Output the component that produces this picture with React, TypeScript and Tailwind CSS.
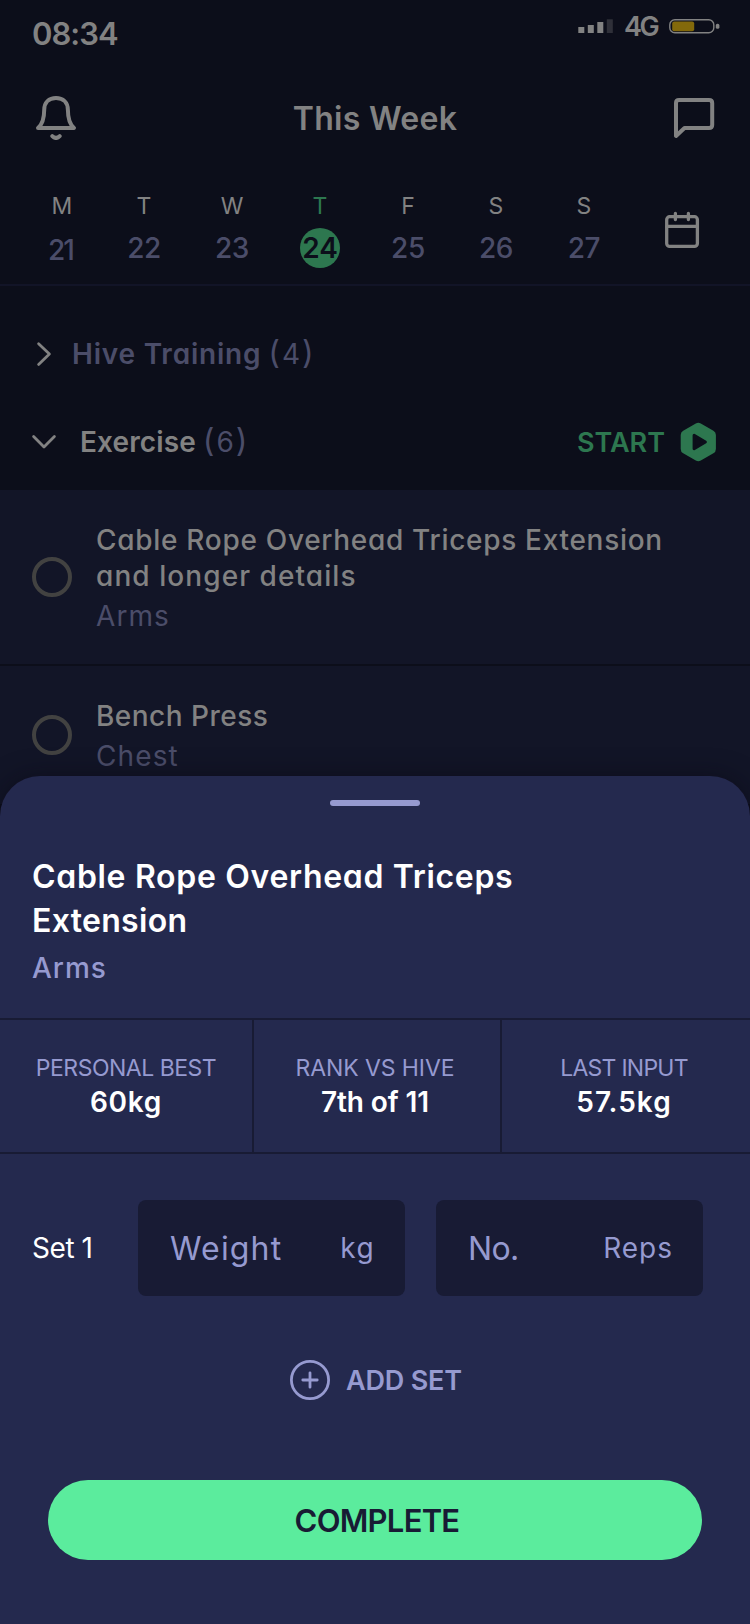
import type { ReactNode } from "react";

type Day = { letter: string; date: string; active?: boolean };

const days: Day[] = [
  { letter: "M", date: "21" },
  { letter: "T", date: "22" },
  { letter: "W", date: "23" },
  { letter: "T", date: "24", active: true },
  { letter: "F", date: "25" },
  { letter: "S", date: "26" },
  { letter: "S", date: "27" },
];

function StatusBar() {
  return (
    <div className="flex h-[72px] items-start justify-between pl-8 pr-[29px]">
      <span className="mt-[13px] text-[31px] font-semibold leading-[42px] tracking-[-0.98px]">08:34</span>
      <div className="mt-[6px] flex h-10 items-center">
        <svg width="36" height="14" viewBox="0 0 36 14" fill="currentColor" className="mr-[10px]">
          <rect x="0.3" y="8" width="6" height="6" />
          <rect x="9.8" y="6" width="6" height="8" />
          <rect x="19.3" y="3" width="6" height="11" />
          <rect x="28.8" y="0.3" width="6" height="13.7" opacity="0.3" />
        </svg>
        <span className="w-[45px] pt-px text-[27px] font-semibold leading-10 tracking-[-2.4px]">4G</span>
        <svg width="52" height="15" viewBox="0 0 52 15">
          <rect x="0.8" y="0.8" width="44" height="13" rx="5" fill="none" stroke="currentColor" strokeWidth="1.4" />
          <rect x="3.2" y="2.4" width="22" height="9.8" rx="2" fill="#83690b" />
          <rect x="46.8" y="4.8" width="3.6" height="5" rx="1.6" fill="currentColor" />
        </svg>
      </div>
    </div>
  );
}

function Header() {
  return (
    <div className="flex h-[92px] items-center justify-between px-[35px]">
      <svg width="42" height="44" viewBox="35 96 42 44" fill="none" stroke="currentColor" strokeWidth="4" strokeLinecap="round" strokeLinejoin="round">
        <path d="M38 128C42.2 124.4 44.2 117 44.2 110C44.2 102.4 49 98 56 98C63 98 67.9 102.4 67.9 110C67.9 117 69.9 124.4 74 128Z" />
        <path d="M52.3 136.1Q56 139.8 59.7 136.1" />
      </svg>
      <h1 className="text-[32px] font-semibold leading-[41px] tracking-[0.27px]">This Week</h1>
      <svg width="42" height="42" viewBox="673 97 42 42" fill="none" stroke="currentColor" strokeWidth="4" strokeLinecap="round" strokeLinejoin="round">
        <path d="M676 136V103Q676 100 679 100H709Q712.2 100 712.2 103V125Q712.2 128 709 128H684.5Z" />
      </svg>
    </div>
  );
}

function DayCell({ day, first }: { day: Day; first: boolean }) {
  return (
    <div className={first ? "flex w-[76px] flex-col items-center" : "flex w-[88px] flex-col items-center"}>
      <span className={day.active ? "text-[23px] leading-7 text-[#2d774f]" : "text-[23px] leading-7"}>{day.letter}</span>
      {day.active ? (
        <span className="mt-2 h-10 w-10 rounded-full bg-[#2d774f] text-center text-[28px] font-semibold leading-10 text-[#0c0e1a]">
          {day.date}
        </span>
      ) : first ? (
        <span className="mt-2 h-10 pr-[3px] pt-1 text-[28px] font-medium leading-9 tracking-[-2px] text-[#4b4d69]">{day.date}</span>
      ) : (
        <span className="mt-2 h-10 text-[28px] font-medium leading-10 tracking-[-0.4px] text-[#4b4d69]">{day.date}</span>
      )}
    </div>
  );
}

function WeekStrip() {
  return (
    <div className="flex h-[122px] items-start justify-between border-b-2 border-[#121427] pl-6 pr-[50px] pt-7">
      <div className="flex">
        {days.map((d, i) => (
          <DayCell key={d.date} day={d} first={i === 0} />
        ))}
      </div>
      <svg width="36" height="38" viewBox="664 211 36 38" fill="none" stroke="currentColor" strokeWidth="3.3" strokeLinecap="round" className="mt-[19px]">
        <rect x="666.7" y="216.7" width="30.7" height="29.7" rx="3" />
        <path d="M667 226.4H697M675.4 213.5V219.5M688.4 213.5V219.5" />
      </svg>
    </div>
  );
}

function Count({ value }: { value: number }) {
  return (
    <span className="ml-[7px] tracking-[2px] text-[#4b4d69]">
      <span className="text-[32px] leading-none">(</span>
      {value}
      <span className="text-[32px] leading-none">)</span>
    </span>
  );
}

function Groups() {
  return (
    <div className="pt-7">
      <div className="flex h-20 items-center pl-8 text-[28px] leading-10 text-[#4b4d69]">
        <svg width="24" height="26" viewBox="32 341 24 26" fill="none" stroke="#828282" strokeWidth="2.8" strokeLinecap="round" strokeLinejoin="round">
          <path d="M38.6 343.8L49.4 354L38.6 364.4" />
        </svg>
        <span className="ml-4 font-semibold tracking-[0.79px]">Hive Training</span>
        <Count value={4} />
      </div>
      <div className="flex h-24 items-center pl-8 pr-[33px] text-[28px] leading-10">
        <svg width="26" height="16" viewBox="31 434 26 16" fill="none" stroke="currentColor" strokeWidth="2.8" strokeLinecap="round" strokeLinejoin="round" className="-ml-px">
          <path d="M33.6 436.6L44 447L54.4 436.6" />
        </svg>
        <span className="ml-[23px] font-semibold tracking-[0.11px]">Exercise</span>
        <Count value={6} />
        <div className="ml-auto flex items-center gap-[14px] text-[#2d774f]">
          <span className="pt-[2px] text-[27px] font-semibold">START</span>
          <svg width="38" height="40" viewBox="0 0 38 40" fill="currentColor" stroke="currentColor" strokeLinejoin="round">
            <path d="M19.3 5.8L31.9 13.1V26.9L19.3 34.2L6.7 26.9V13.1Z" strokeWidth="10" />
            <path d="M15.1 13.3L26.4 20L15.1 26.7Z" fill="#0c0e1a" stroke="#0c0e1a" strokeWidth="3" />
          </svg>
        </div>
      </div>
    </div>
  );
}

function ExerciseRow({ children, area }: { children: ReactNode; area: ReactNode }) {
  return (
    <div className="flex items-center gap-6 border-b-2 border-[#0c0e1a] bg-[#121527] pl-8">
      <span className="mb-px size-10 shrink-0 rounded-full border-4 border-[#424241]" />
      <div className="pb-[26px] pt-8 text-[28px]">
        <p className="font-medium leading-9">{children}</p>
        <p className="leading-[44px] tracking-[1.1px] text-[#4b4d69]">{area}</p>
      </div>
    </div>
  );
}

function Stat({ label, value }: { label: ReactNode; value: ReactNode }) {
  return (
    <div className="flex flex-col items-center border-r-2 border-[#181b34] pt-8 text-white not-first:pr-1 last:border-r-0">
      <span className="text-[23px] leading-8 text-[#969ad0]">{label}</span>
      <span className="text-[28px] font-semibold leading-9">{value}</span>
    </div>
  );
}

function Field({ name, unit }: { name: ReactNode; unit: ReactNode }) {
  return (
    <div className="flex h-24 w-[267px] items-center justify-between rounded-lg bg-[#181b34] pl-8 pr-[30px] text-[#969ad0]">
      <span className="pt-px text-[32px] leading-[42px]">{name}</span>
      <span className="text-[28px] leading-10">{unit}</span>
    </div>
  );
}

function SetSheet() {
  return (
    <div className="absolute inset-x-0 bottom-0 top-[776px] flex flex-col rounded-t-[40px] bg-[#24294e] pt-6 shadow-[0_0_24px_rgba(10,8,20,0.5)]">
      <div className="h-[6px] w-[90px] self-center rounded-full bg-[#969ad0]" />
      <div className="mt-[49px] pl-8">
        <h2 className="text-[32px] font-semibold leading-[44px] text-white">
          <span className="block tracking-[0.68px]">Cable Rope Overhead Triceps</span>
          <span className="block tracking-[0.3px]">Extension</span>
        </h2>
        <p className="text-[28px] font-medium leading-[50px] tracking-[0.95px] text-[#969ad0]">Arms</p>
      </div>
      <div className="mt-[25px] grid h-[136px] grid-cols-[254px_248px_248px] border-y-2 border-[#181b34]">
        <Stat
          label={<span className="tracking-[-0.5px]">PERSONAL BEST</span>}
          value={<span className="tracking-[0.75px]">60kg</span>}
        />
        <Stat
          label={<span className="tracking-[-0.08px]">RANK VS HIVE</span>}
          value={<span className="tracking-[-0.1px]">7th of 11</span>}
        />
        <Stat
          label={<span className="tracking-[-0.75px]">LAST INPUT</span>}
          value={<span className="tracking-[1px]">57.5kg</span>}
        />
      </div>
      <div className="mt-[46px] flex items-center pl-8">
        <span className="w-[106px] text-[28px] leading-10 tracking-[-0.45px] text-white">Set 1</span>
        <div className="flex gap-[31px]">
          <Field
            name={<span className="tracking-[1.16px]">Weight</span>}
            unit={<span className="tracking-[1.4px]">kg</span>}
          />
          <Field
            name={<span className="tracking-[-0.6px]">No.</span>}
            unit={<span className="tracking-[1px]">Reps</span>}
          />
        </div>
      </div>
      <button className="mt-16 flex h-10 items-center justify-center gap-4 pl-[2px] text-[#969ad0]">
        <svg width="40" height="40" viewBox="0 0 40 40" fill="none" stroke="currentColor" strokeWidth="2.8" strokeLinecap="round">
          <circle cx="20" cy="20" r="18.6" />
          <path d="M20 12.8V27.2M12.8 20H27.2" />
        </svg>
        <span className="pt-[2px] text-[27px] font-semibold leading-10 tracking-[-0.2px]">ADD SET</span>
      </button>
      <button className="mx-12 mt-20 h-20 rounded-full bg-[#5bec9d] pl-1 pt-[2px] text-[31px] font-semibold leading-[78px] tracking-[-0.75px] text-[#181b34]">
        COMPLETE
      </button>
    </div>
  );
}

export default function App() {
  return (
    <div className="relative h-[1624px] w-[750px] overflow-hidden bg-[#0c0e1a] font-['Inter',sans-serif] text-[#828282] [font-feature-settings:'cv11']">
      <StatusBar />
      <Header />
      <WeekStrip />
      <Groups />
      <ExerciseRow area="Arms">
        <span className="block tracking-[0.7px]">Cable Rope Overhead Triceps Extension</span>
        <span className="block tracking-[1.07px]">and longer details</span>
      </ExerciseRow>
      <ExerciseRow area="Chest">
        <span className="block tracking-[0.48px]">Bench Press</span>
      </ExerciseRow>
      <SetSheet />
    </div>
  );
}
